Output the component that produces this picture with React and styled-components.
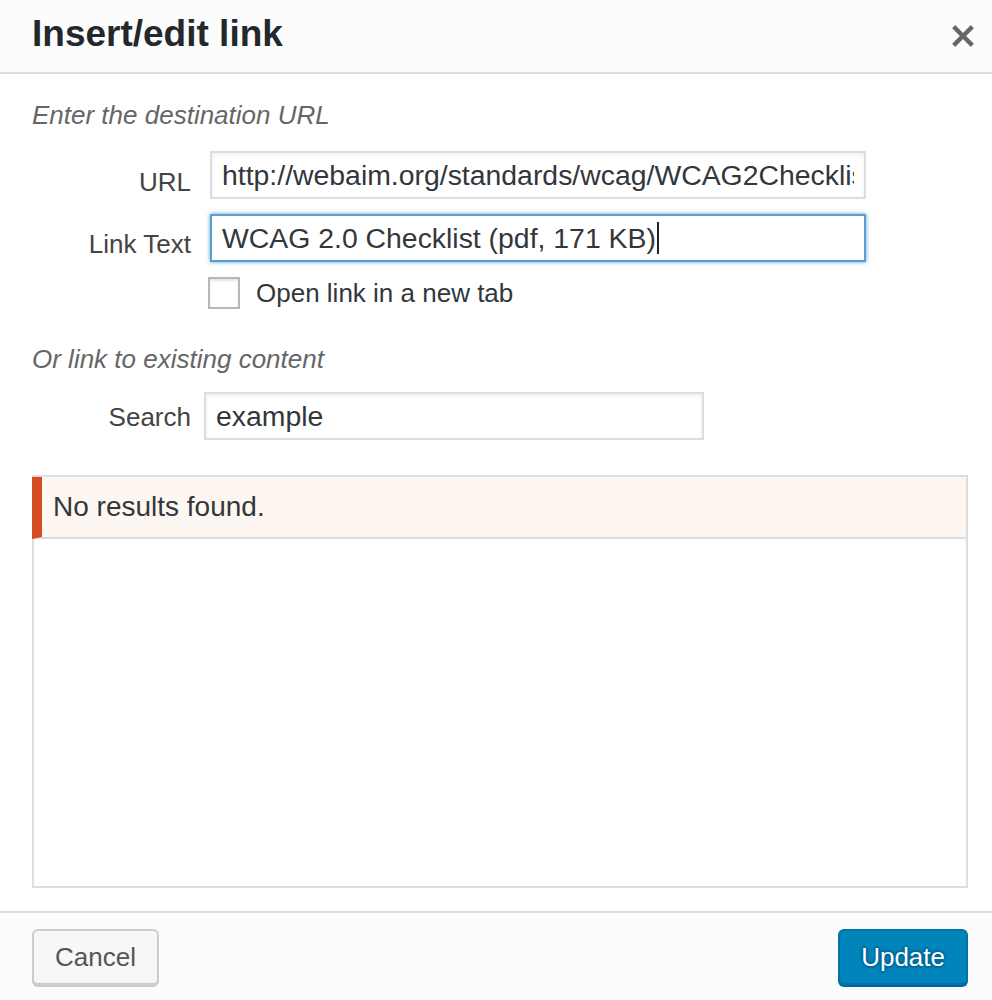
import React from 'react'
import styled, { createGlobalStyle } from 'styled-components'

const GlobalStyle = createGlobalStyle`
  body{
    margin:0;
    background:#fff;
    font-family:"Liberation Sans", Arial, Helvetica, sans-serif;
  }
`;

const Dialog = styled.div`
  width:992px;
  height:1000px;
  display:flex;
  flex-direction:column;
  background:#fff;
`;

const Header = styled.header`
  height:72px;
  display:flex;
  justify-content:space-between;
  align-items:flex-start;
  padding:0 7px 0 32px;
  background:#fcfcfc;
  border-bottom:2px solid #ddd;
`;

const Title = styled.h1`
  margin:0;
  font-size:37px;
  line-height:68px;
  font-weight:700;
  color:#23282d;
`;

const CloseButton = styled.button`
  align-self:center;
  width:44px;
  height:44px;
  padding:0;
  border:none;
  background:none;
  color:#666;
  display:flex;
`;

const Body = styled.section`
  padding:23px 24px 23px 32px;
`;

const Hint = styled.p`
  margin:0 0 ${props => props.after}px;
  font-size:26px;
  line-height:36px;
  font-style:italic;
  color:#666;
`;

const Row = styled.div`
  display:flex;
  align-items:flex-start;
  margin-bottom:${props => props.after}px;
`;

const Label = styled.label`
  width:159px;
  flex:none;
  padding-top:${props => props.top}px;
  text-align:right;
  font-size:26px;
  line-height:36px;
  color:#444;
`;

const TextInput = styled.input`
  box-sizing:border-box;
  width:${props => props.w}px;
  height:48px;
  margin:0 0 0 ${props => props.gap}px;
  padding:0 10px;
  border:2px solid #ddd;
  box-shadow:inset 0 2px 4px rgba(0,0,0,.07);
  background:#fff;
  font-family:inherit;
  font-size:28.4px;
  color:#32373c;
  outline:none;
`;

const FocusedInput = styled.div`
  box-sizing:border-box;
  width:${props => props.w}px;
  height:48px;
  margin-left:${props => props.gap}px;
  padding:0 10px;
  display:flex;
  align-items:center;
  border:2px solid #5b9dd9;
  box-shadow:0 0 4px rgba(30,140,190,.8);
  background:#fff;
  font-size:28.4px;
  color:#32373c;
  white-space:nowrap;
  overflow:hidden;
`;

const Caret = styled.span`
  display:inline-block;
  width:2px;
  height:32px;
  margin-left:1px;
  background:#222;
`;

const CheckRow = styled.label`
  display:flex;
  align-items:center;
  padding-left:176px;
  margin-bottom:32px;
  font-size:26px;
  line-height:32px;
  color:#32373c;
`;

const Checkbox = styled.span`
  box-sizing:border-box;
  width:32px;
  height:32px;
  margin-right:16px;
  border:2px solid #b4b9be;
  background:#fff;
  box-shadow:inset 0 2px 2px rgba(0,0,0,.1);
`;

const Results = styled.div`
  box-sizing:border-box;
  height:413px;
  border:2px solid #ddd;
  background:#fff;
`;

const Notice = styled.div`
  margin-left:-2px;
  padding:0 11px;
  line-height:60px;
  font-size:28px;
  color:#32373c;
  background:#fef7f1;
  border-left:10px solid #d54e21;
  border-bottom:2px solid #ddd;
`;

const Footer = styled.footer`
  flex:1;
  display:flex;
  justify-content:space-between;
  align-items:flex-start;
  padding:16px 24px 0 32px;
  background:#fcfcfc;
  border-top:2px solid #ddd;
`;

const Button = styled.button`
  height:56px;
  padding:0 ${props => props.pad}px;
  border-radius:6px;
  font-family:inherit;
  font-size:26px;
  line-height:52px;
  border:2px solid ${props => props.primary ? '#0073aa' : '#ccc'};
  background:${props => props.primary ? '#0085ba' : '#f7f7f7'};
  color:${props => props.primary ? '#fff' : '#555'};
  box-shadow:0 2px 0 ${props => props.primary ? '#006799' : '#ccc'};
  text-shadow:${props => props.primary
    ? '0 -2px 2px #006799, 2px 0 2px #006799, 0 2px 2px #006799, -2px 0 2px #006799'
    : 'none'};
`;

const CloseIcon = () => (
  <svg width="44" height="44" viewBox="0 0 20 20" fill="currentColor">
    <path d="M14.95 6.46L11.41 10l3.54 3.54-1.41 1.41L10 11.42l-3.53 3.53-1.42-1.42L8.58 10 5.05 6.47l1.42-1.42L10 8.58l3.54-3.53z" />
  </svg>
)

const App = () => {
  return (
    <>
      <GlobalStyle />
      <Dialog>
        <Header>
          <Title>Insert/edit link</Title>
          <CloseButton aria-label="Close"><CloseIcon /></CloseButton>
        </Header>
        <Body>
          <Hint after={18}>Enter the destination URL</Hint>
          <Row after={14}>
            <Label top={13}>URL</Label>
            <TextInput w={656} gap={19} readOnly value="http://webaim.org/standards/wcag/WCAG2Checklist.pdf" />
          </Row>
          <Row after={15}>
            <Label top={12}>Link Text</Label>
            <FocusedInput w={656} gap={19}>
              WCAG 2.0 Checklist (pdf, 171 KB)<Caret />
            </FocusedInput>
          </Row>
          <CheckRow>
            <Checkbox />
            Open link in a new tab
          </CheckRow>
          <Hint after={15}>Or link to existing content</Hint>
          <Row after={35}>
            <Label top={7}>Search</Label>
            <TextInput w={500} gap={13} readOnly value="example" />
          </Row>
          <Results>
            <Notice>No results found.</Notice>
          </Results>
        </Body>
        <Footer>
          <Button pad={21}>Cancel</Button>
          <Button primary pad={21}>Update</Button>
        </Footer>
      </Dialog>
    </>
  )
}

export default App
